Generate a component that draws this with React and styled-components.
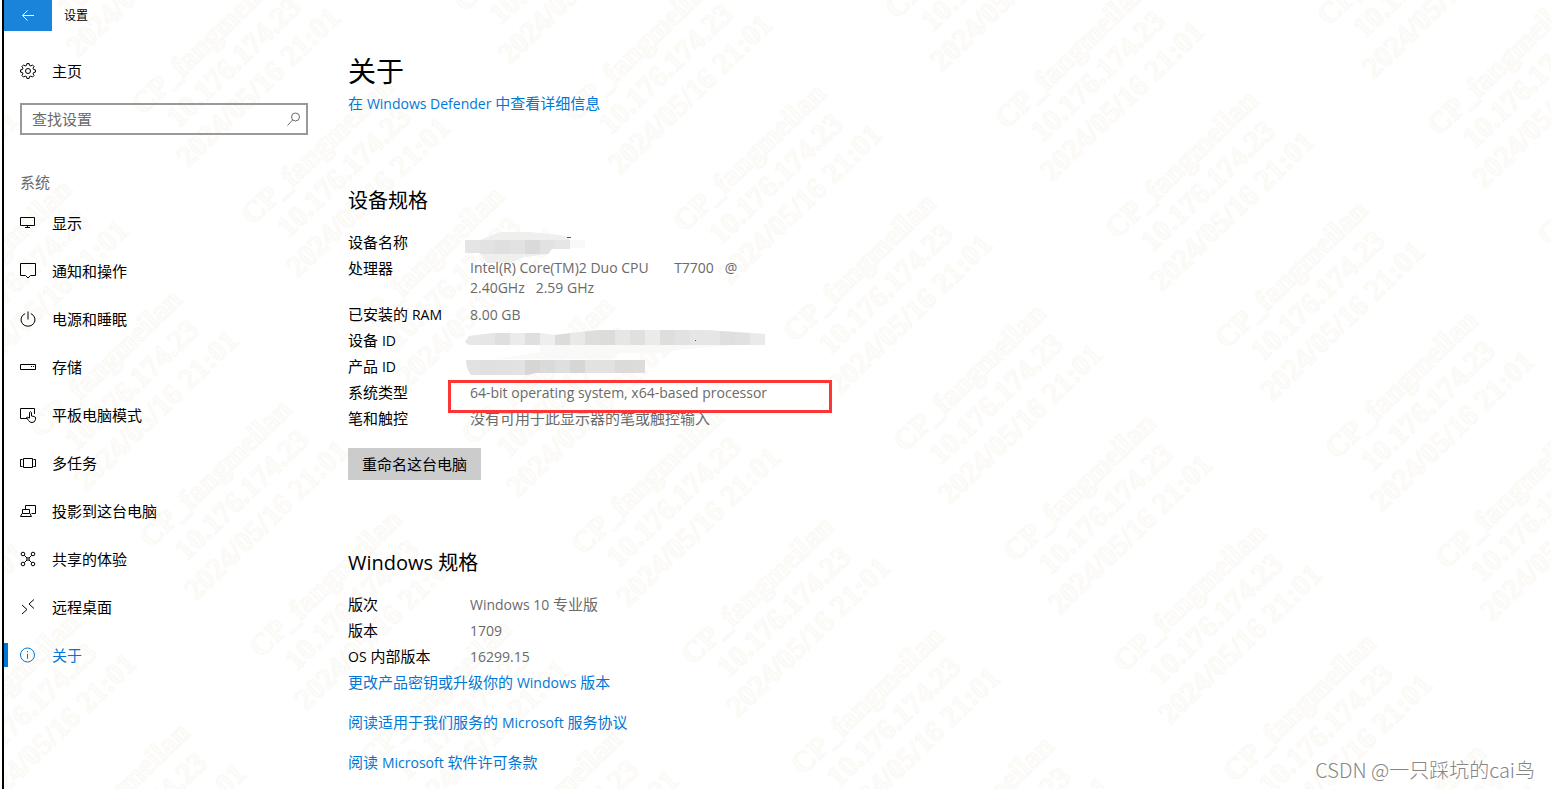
import React, { useState } from "react";
import styled, { createGlobalStyle, ThemeProvider } from "styled-components";

const theme = {
  accent: "#0078d7",
  backButton: "#1a83da",
  text: "#000",
  muted: "#6a6a6a",
  inputBorder: "#999",
  buttonBackground: "#ccc",
  highlight: "#fd3535",
};

const GlobalStyle = createGlobalStyle`
  * {
    box-sizing: border-box;
  }

  body {
    margin: 0;
    background: #fff;
    font-family: "Open Sans", "Noto Sans CJK SC", sans-serif;
    font-size: 15px;
    line-height: 20px;
  }
`;

const Page = styled.div`
  position: relative;
  isolation: isolate;
  min-height: 100vh;
  margin-left: 2px;
  border-left: 2px solid #000;
  overflow: hidden;
  color: ${(props) => props.theme.text};
`;

const TitleBar = styled.header`
  display: flex;
  align-items: center;
  gap: 12px;
  height: 31px;
  font-size: 12px;
`;

const BackButton = styled.button`
  display: flex;
  align-items: center;
  justify-content: center;
  width: 48px;
  height: 31px;
  padding: 0;
  border: none;
  background: ${(props) => props.theme.backButton};
  color: #fff;
`;

const Columns = styled.div`
  display: flex;
  gap: 40px;
`;

const Sidebar = styled.aside`
  flex: none;
  width: 304px;
  padding-top: 16px;
`;

const NavLink = styled.a`
  position: relative;
  display: flex;
  align-items: center;
  gap: 16px;
  height: 48px;
  padding-left: 16px;
  color: ${(props) => (props.$active ? props.theme.accent : props.theme.text)};
  text-decoration: none;

  &::before {
    content: "";
    position: absolute;
    left: 0;
    width: 4px;
    height: 24px;
    background: ${(props) => (props.$active ? props.theme.accent : "transparent")};
  }
`;

const SearchBox = styled.label`
  display: flex;
  align-items: center;
  height: 32px;
  margin: 8px 0 35px 16px;
  padding: 0 4px 0 10px;
  border: 2px solid ${(props) => props.theme.inputBorder};
  color: ${(props) => props.theme.muted};
`;

const SearchInput = styled.input`
  flex: 1;
  min-width: 0;
  padding: 0;
  border: none;
  outline: none;
  background: transparent;
  color: inherit;
  font: inherit;

  &::placeholder {
    color: inherit;
    opacity: 1;
  }
`;

const SectionLabel = styled.div`
  margin: 0 0 5px 16px;
  line-height: 24px;
  color: ${(props) => props.theme.muted};
`;

const Main = styled.main`
  flex: 1;
  min-width: 0;
  padding-top: 20px;
`;

const Title = styled.h1`
  margin: 0 0 2px;
  font-size: 28px;
  font-weight: 400;
  line-height: 40px;
`;

const Subtitle = styled.h2`
  margin: ${(props) => props.$top}px 0 14px;
  font-size: 20px;
  font-weight: 400;
  line-height: 28px;
`;

const TextLink = styled.a`
  color: ${(props) => props.theme.accent};
  text-decoration: none;
`;

const LinkList = styled.div`
  display: flex;
  flex-direction: column;
  align-items: flex-start;
  gap: 20px;
  padding: 3px 0 12px;
`;

const SpecTable = styled.table`
  border-collapse: collapse;
`;

const SpecName = styled.th`
  width: 122px;
  padding: 3px 0;
  font-weight: 400;
  text-align: left;
  vertical-align: top;
`;

const SpecValue = styled.td`
  position: relative;
  padding: 3px 0;
  color: ${(props) => props.theme.muted};
  vertical-align: top;
  white-space: pre-wrap;
`;

/* the Latin face runs wide next to the Chinese one */
const Latin = styled.span`
  font-size: 14px;
  line-height: 1;
`;

const Processor = styled.div`
  font-size: 14px;
  line-height: 20px;
`;

const Highlight = styled.span`
  position: absolute;
  z-index: 1;
  top: 1px;
  left: -22px;
  width: 384px;
  height: 33px;
  border: 3px solid ${(props) => props.theme.highlight};
`;

const Mosaic = styled.svg`
  position: absolute;
  top: ${(props) => props.$top}px;
  left: -5px;
`;

const RenameButton = styled.button`
  display: block;
  height: 32px;
  margin-top: 17px;
  padding: 0 14px;
  border: none;
  background: ${(props) => props.theme.buttonBackground};
  color: inherit;
  font: inherit;
`;

const WatermarkLayer = styled.svg`
  position: absolute;
  z-index: -1;
  inset: 0;
  width: 100%;
  height: 100%;
  pointer-events: none;
  font: bold 30px "Liberation Serif", serif;
  fill: #fafdf8;
  stroke: #fdf8f5;
  stroke-width: 1px;
  text-anchor: middle;
  text-rendering: geometricPrecision;
`;

const Credit = styled.div`
  position: absolute;
  right: 16px;
  bottom: 5px;
  color: #858585;
  font-family: "Noto Sans CJK SC", sans-serif;
  font-size: 20px;
  font-weight: 300;
  line-height: 28px;
  text-shadow: 1px 1px 0 #fff;
`;

const Icon = ({ children }) => (
  <svg width="16" height="16" viewBox="0 0 16 16" fill="none" stroke="currentColor" aria-hidden="true">
    {children}
  </svg>
);

const gearPath = () => {
  const points = [];
  for (let i = 0; i < 8; i++) {
    [[-15, 5.8], [-9, 7.5], [9, 7.5], [15, 5.8]].forEach(([offset, radius]) => {
      const angle = ((i * 45 + offset) * Math.PI) / 180;
      points.push(`${(8 + radius * Math.cos(angle)).toFixed(2)} ${(8 + radius * Math.sin(angle)).toFixed(2)}`);
    });
  }
  return `M${points.join("L")}Z`;
};

const icons = {
  gear: (
    <>
      <path d={gearPath()} />
      <circle cx="8" cy="8" r="2.5" />
    </>
  ),
  display: <path d="M.5 2.5h14v8H.5zM7.5 10.5v2M5 12.5h5" />,
  notifications: <path d="M.5.5h15v12h-5L8 15l-2.5-2.5h-5z" />,
  power: <path d="M8 .5v8M5.2 2.6a7 6.6 0 1 0 5.6 0" />,
  storage: <path d="M.5 5.5h15v5H.5zM11 7.5h1M13 7.5h1" />,
  tablet: (
    <>
      <path d="M7 11.5H.5v-10h14V7" />
      <path d="M9.5 11V5.5q1-1.5 2 0V9l3 .6q1 .3 1 1.4v1.5q-.5 3-3.5 3-2.5 0-3.5-2l-2-3q1-1 3 .8" />
    </>
  ),
  tasks: <path d="M3.5 3.5h9v9h-9zM2.5 4.5h-2v7h2M13.5 4.5h2v7h-2" />,
  project: <path d="M5.5 6V2.5h10v8h-4M2.5 6.5h7v4h-7zM2 10.5l-1.5 3h11l-1.5-3" />,
  share: (
    <>
      <circle cx="3" cy="3" r="1.8" />
      <circle cx="13" cy="3" r="1.8" />
      <circle cx="3" cy="13" r="1.8" />
      <circle cx="13" cy="13" r="1.8" />
      <path d="M4.3 4.3l7.4 7.4M11.7 4.3l-7.4 7.4" />
      <circle cx="8" cy="8" r="1.3" fill="#fff" />
    </>
  ),
  remote: <path d="M2 6l5 4.500-5 4.500M14 .5L9 5l5 4.500" />,
  info: (
    <>
      <circle cx="7.5" cy="8" r="7" />
      <path d="M7.5 6.8v5M7.5 4v1.3" />
    </>
  ),
};

const navItems = [
  { icon: "display", label: "显示" },
  { icon: "notifications", label: "通知和操作" },
  { icon: "power", label: "电源和睡眠" },
  { icon: "storage", label: "存储" },
  { icon: "tablet", label: "平板电脑模式" },
  { icon: "tasks", label: "多任务" },
  { icon: "project", label: "投影到这台电脑" },
  { icon: "share", label: "共享的体验" },
  { icon: "remote", label: "远程桌面" },
  { icon: "info", label: "关于", active: true },
];

/* one shade per 15px block, clipped to the brushed outline */
const mosaics = {
  name: {
    offset: 0,
    clip: "M0 11H15L30 5 36 3H65L95 6 104 8V11H120V19H105V20H87L83 25 60 28 45 34H22L15 24H0z",
    top: 11,
    height: 14,
    shades: ["#e5e5e5", "#e2e2e2", "#dfdfdf", "#e2e2e2", "#dbdada", "#e2e2e2", "#e6e6e6", "#f9f9f9"],
  },
  device: {
    offset: 3,
    clip: "M0 12L4 6 20 4 30 3H75L90 5 115 2 135 0H240L270 2 300 4V15H4Q0 12 0 12z",
    top: 0,
    height: 15,
    shades: [
      "#e7e7e7", "#e6e6e6", "#dfdfdf", "#ebebeb", "#dfdfdf", "#eee", "#dcdcda", "#ebe9e7", "#dedede", "#dcdcdb",
      "#e6e6e4", "#e0e0e0", "#ecebe8", "#dededd", "#e2e2e2", "#e6e6e6", "#e6e6e6", "#dfdfdf", "#e1e1e1", "#eaeaea",
    ],
  },
  product: {
    offset: 2,
    clip: "M1 5H180V18H71L62 20H6Q1 13 1 5z",
    top: 5,
    height: 15,
    shades: [
      "#e2e2e2", "#e0e0e0", "#e1e1e1", "#e2e2e2", "#d7d6d5", "#dbdada",
      "#dfdfe0", "#d7d6d6", "#e3e2e0", "#e2e2e2", "#dcdbda", "#dddcdb",
    ],
  },
};

const Redacted = ({ kind }) => {
  const { offset, clip, top, height, shades } = mosaics[kind];
  return (
    <Mosaic $top={offset} width="320" height="36" role="img" aria-label="已隐藏">
      <clipPath id={`clip-${kind}`}>
        <path d={clip} />
      </clipPath>
      {kind === "device" && <path d="M75 15H275L220 19 195 23H150V29H30L75 22z" fill="#f9f9f8" />}
      <g clipPath={`url(#clip-${kind})`}>
        <rect width="320" height="36" fill="#efefee" />
        {shades.map((shade, i) => (
          <rect key={i} x={i * 15} y={top} width="15" height={height} fill={shade} />
        ))}
      </g>
      {kind === "name" && <path d="M102 8.5h4" stroke="#555" />}
      {kind === "device" && <path d="M230 10.5h1" stroke="#555" />}
    </Mosaic>
  );
};

const deviceSpecs = [
  { name: "设备名称", value: <Redacted kind="name" /> },
  {
    name: "处理器",
    value: <Processor>{"Intel(R) Core(TM)2 Duo CPU       T7700   @\n2.40GHz   2.59 GHz"}</Processor>,
  },
  { name: <>已安装的 <Latin>RAM</Latin></>, value: <Latin>8.00 GB</Latin> },
  { name: <>设备 <Latin>ID</Latin></>, value: <Redacted kind="device" /> },
  { name: <>产品 <Latin>ID</Latin></>, value: <Redacted kind="product" /> },
  {
    name: "系统类型",
    value: (
      <>
        <Latin>64-bit operating system, x64-based processor</Latin>
        <Highlight />
      </>
    ),
  },
  { name: "笔和触控", value: "没有可用于此显示器的笔或触控输入" },
];

const windowsSpecs = [
  { name: "版次", value: <><Latin>Windows 10</Latin> 专业版</> },
  { name: "版本", value: <Latin>1709</Latin> },
  { name: <><Latin>OS</Latin> 内部版本</>, value: <Latin>16299.15</Latin> },
];

const Specs = ({ rows }) => (
  <SpecTable>
    <tbody>
      {rows.map((row, i) => (
        <tr key={i}>
          <SpecName scope="row">{row.name}</SpecName>
          <SpecValue>{row.value}</SpecValue>
        </tr>
      ))}
    </tbody>
  </SpecTable>
);

const Watermark = () => {
  const stamps = [];
  for (let row = -6; row < 6; row++) {
    for (let step = -10; step < 14; step++) {
      const x = 881 + row * 432 + step * 110;
      const y = 288 + row * 7 + step * 110;
      if (x > -100 && x < 1640 && y > -90 && y < 890) {
        stamps.push({ x, y });
      }
    }
  }
  return (
    <WatermarkLayer aria-hidden="true">
      {stamps.map(({ x, y }) => (
        <g key={`${x},${y}`} transform={`translate(${x} ${y}) rotate(-44)`}>
          <text x="-4" y="-23">CP_fangmeilan</text>
          <text y="11">10.176.174.23</text>
          <text y="46">2024/05/16 21:01</text>
        </g>
      ))}
    </WatermarkLayer>
  );
};

const App = () => {
  const [query, setQuery] = useState("");

  return (
    <ThemeProvider theme={theme}>
      <GlobalStyle />
      <Page>
        <Watermark />
        <TitleBar>
          <BackButton aria-label="返回">
            <Icon>
              <path d="M14 7.5H2.5M7.5 2.5l-5 5 5 5" />
            </Icon>
          </BackButton>
          设置
        </TitleBar>
        <Columns>
          <Sidebar>
            <NavLink href="#home">
              <Icon>{icons.gear}</Icon>
              主页
            </NavLink>
            <SearchBox>
              <SearchInput
                aria-label="查找设置"
                placeholder="查找设置"
                value={query}
                onChange={(e) => setQuery(e.target.value)}
              />
              <Icon>
                <path d="M6.8 8.8L1.5 14.5" />
                <circle cx="9.5" cy="6" r="4" />
              </Icon>
            </SearchBox>
            <SectionLabel>系统</SectionLabel>
            <nav>
              {navItems.map((item) => (
                <NavLink key={item.icon} href={`#${item.icon}`} $active={item.active}>
                  <Icon>{icons[item.icon]}</Icon>
                  {item.label}
                </NavLink>
              ))}
            </nav>
          </Sidebar>
          <Main>
            <Title>关于</Title>
            <TextLink href="#defender">
              在 <Latin>Windows Defender</Latin> 中查看详细信息
            </TextLink>
            <Subtitle $top={74}>设备规格</Subtitle>
            <Specs rows={deviceSpecs} />
            <RenameButton>重命名这台电脑</RenameButton>
            <Subtitle $top={69}>Windows 规格</Subtitle>
            <Specs rows={windowsSpecs} />
            <LinkList>
              <TextLink href="#product-key">
                更改产品密钥或升级你的 <Latin>Windows</Latin> 版本
              </TextLink>
              <TextLink href="#services">
                阅读适用于我们服务的 <Latin>Microsoft</Latin> 服务协议
              </TextLink>
              <TextLink href="#license">
                阅读 <Latin>Microsoft</Latin> 软件许可条款
              </TextLink>
            </LinkList>
          </Main>
        </Columns>
        <Credit>CSDN @一只踩坑的cai鸟</Credit>
      </Page>
    </ThemeProvider>
  );
};

export default App;
